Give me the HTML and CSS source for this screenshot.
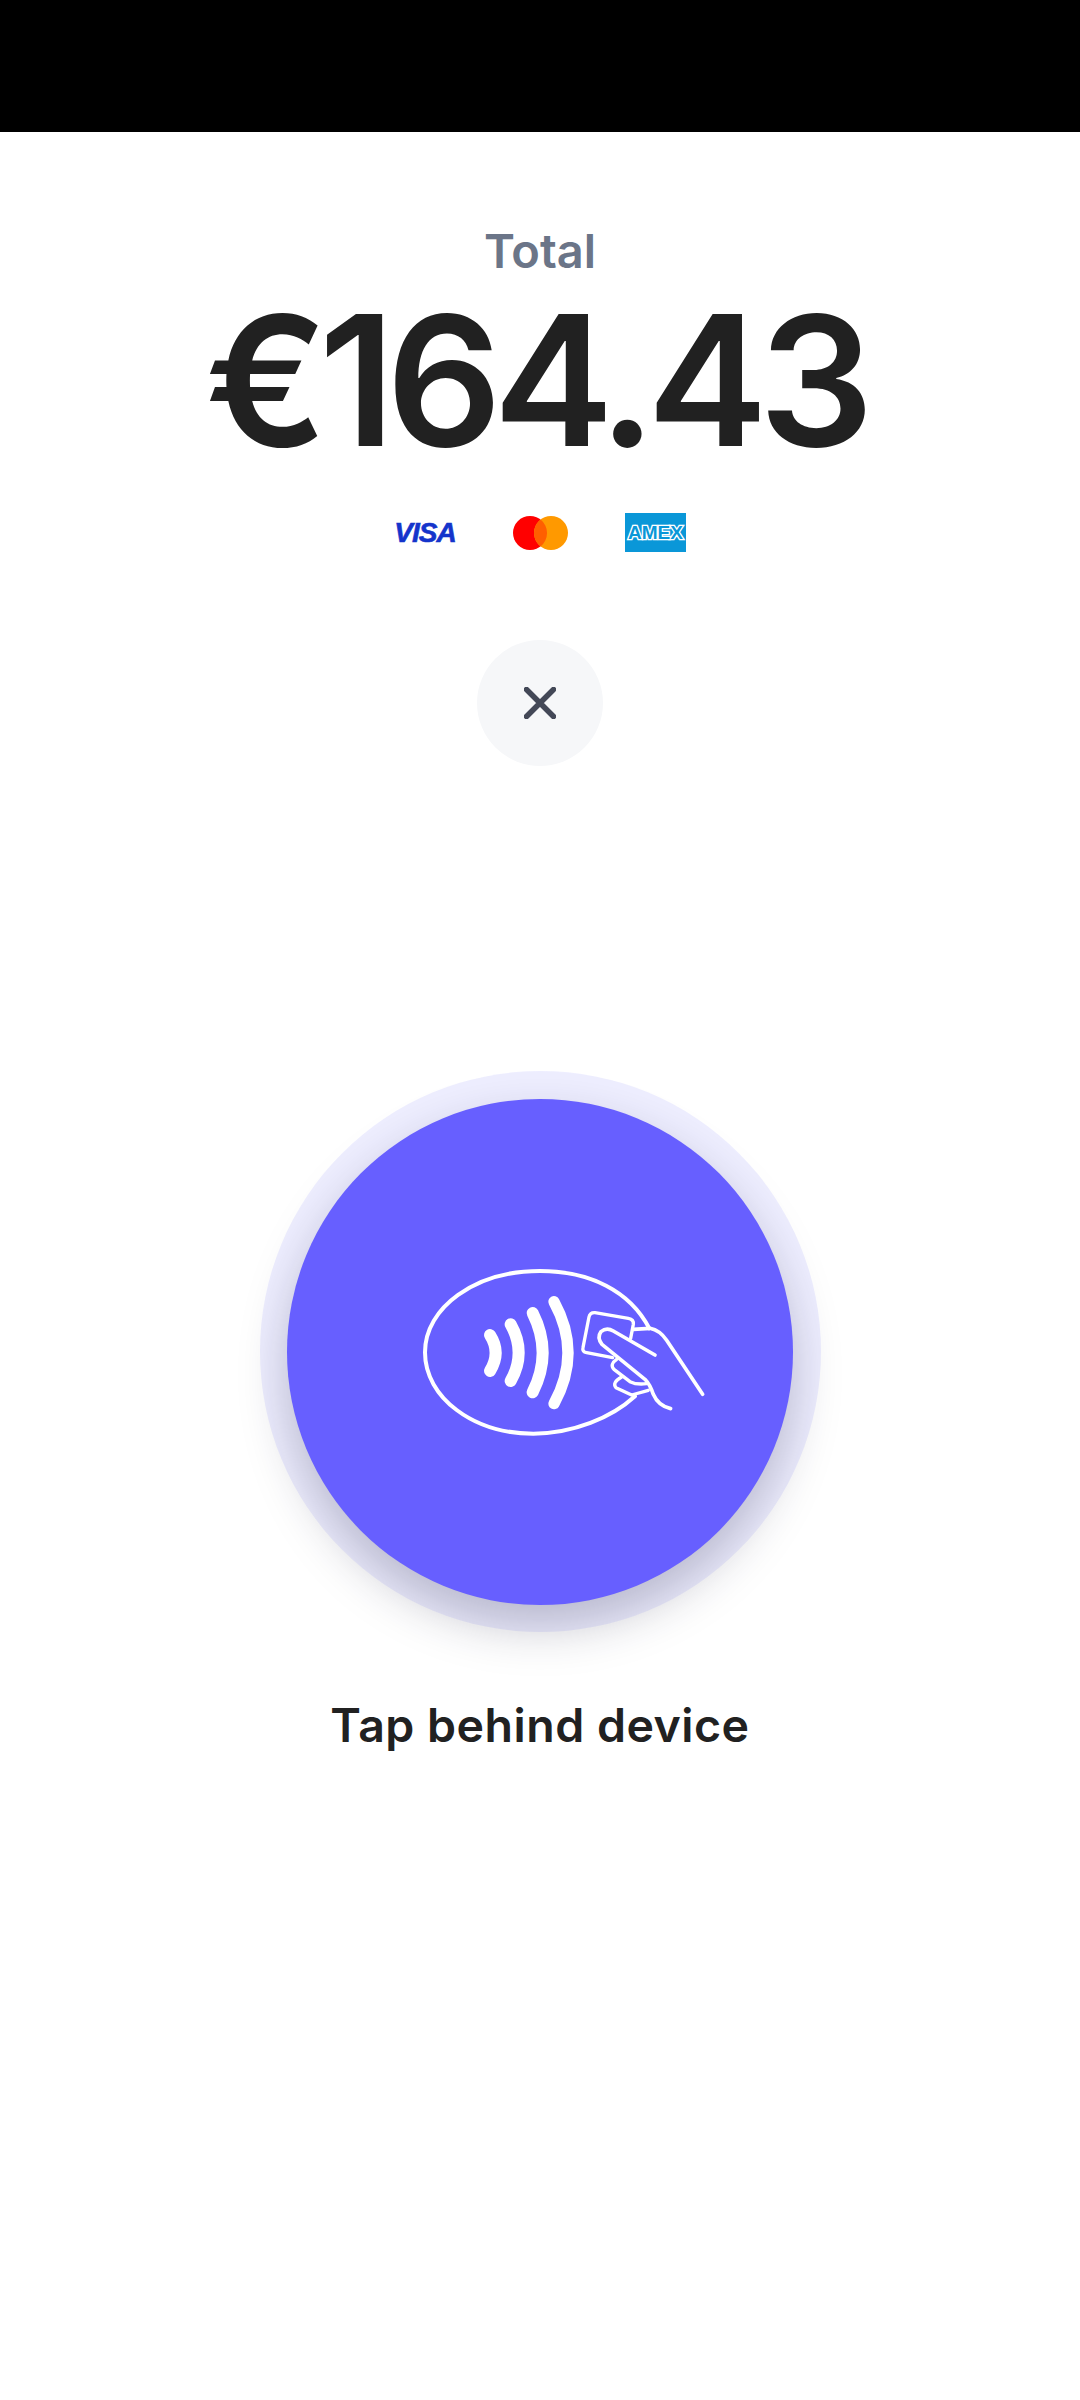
FILE: index.html
```html
<!DOCTYPE html>
<html>
<head>
	<meta charset="utf-8">
	<title>Tap to pay</title>
	<link rel="stylesheet" href="styles.css">
</head>
<body>
  <div class="status-bar"></div>
  <main class="screen">
    <p class="total-label">Total</p>
    <h1 class="total-amount">€164.43</h1>
    <div class="card-logos">
      <div class="logo"><span class="visa">VISA</span></div>
      <div class="logo">
        <svg width="55" height="34" viewBox="0 0 55 34">
          <circle cx="17" cy="17" r="17" fill="#ff0000"/>
          <circle cx="38" cy="17" r="17" fill="#ff9900"/>
          <path d="M27.5 3.6a17 17 0 0 1 0 26.8a17 17 0 0 1 0-26.8z" fill="#ff5f00"/>
        </svg>
      </div>
      <div class="logo">
        <svg class="amex" width="61" height="39" viewBox="0 0 61 39">
          <rect width="61" height="39" fill="#0a97d8"/>
          <text class="amex-text" x="30.5" y="25.5" text-anchor="middle" textLength="55" lengthAdjust="spacingAndGlyphs">AMEX</text>
        </svg>
      </div>
    </div>
    <button class="close-btn">
      <svg width="32" height="32" viewBox="0 0 32 32">
        <path d="M2.5 2.5L29.5 29.5M29.5 2.5L2.5 29.5" stroke="#434857" stroke-width="5.5" stroke-linecap="round"/>
      </svg>
    </button>
    <div class="tap-ring">
      <div class="tap-circle">
        <svg class="tap-icon" width="506" height="506" viewBox="0 0 506 506">
          <!-- traced at 3x, so the group scales back down -->
          <g transform="translate(113 142) scale(.3333)" fill="none" stroke="#fff" stroke-linecap="round" stroke-linejoin="round">
            <path stroke-width="12" d="M748 262C690 150 570 90 420 90C225 90 75 200 75 334C75 470 220 578 400 578C520 578 635 530 705 466"/>
            <path stroke-width="36" d="M270 282Q304 335 270 390"/>
            <path stroke-width="36" d="M332 250Q380 335 332 420"/>
            <path stroke-width="36" d="M398 216Q458 335 398 454"/>
            <path stroke-width="34" d="M462 182Q546 335 462 488"/>
            <path stroke-width="10" d="M638 350L560 335Q546 332 549 320L567 228Q570 214 585 215L685 232Q702 235 700 250L692 292"/>
            <path stroke-width="11" d="M765 342L640 270Q620 258 603 272Q590 290 606 310L735 415Q750 430 760 460Q775 495 812 503"/>
            <path stroke-width="11" d="M700 265L750 262Q780 268 800 298L908 460"/>
            <path stroke-width="10" d="M650 355Q628 370 642 385L690 422Q710 432 740 428"/>
            <path stroke-width="10" d="M665 408Q635 425 648 440L695 462L745 448"/>
          </g>
        </svg>
      </div>
    </div>
    <p class="tap-label">Tap behind device</p>
  </main>
</body>
</html>
```

FILE: styles.css
```css
body {
	font-family: Inter, "Noto Sans", sans-serif;
	margin: 0;
	padding: 0;
	background: #fff;
}
.status-bar {
	height: 132px;
	background: #000;
}
.screen {
	display: flex;
	flex-direction: column;
	align-items: center;
}
.total-label {
	margin: 93px 0 0;
	font-size: 47px;
	line-height: 52px;
	font-weight: 600;
	color: #6b7588;
}
.total-amount {
	margin: 22px 0 0;
	padding-right: 10px;
	font-size: 181px;
	line-height: 164px;
	font-weight: 600;
	color: #212121;
	letter-spacing: -9px;
}
.card-logos {
	display: flex;
	gap: 54px;
	margin-top: 50px;
}
.logo {
	width: 61px;
	height: 39px;
	display: flex;
	align-items: center;
	justify-content: center;
}
.visa {
	font-family: "Liberation Sans", sans-serif;
	font-size: 28px;
	font-weight: bold;
	font-style: italic;
	color: #1434cb;
	letter-spacing: -1px;
	-webkit-text-stroke: 0.6px #1434cb;
}
.amex {
	display: block;
}
.amex-text {
	font-family: "Liberation Sans", sans-serif;
	font-size: 18px;
	font-weight: bold;
	fill: #0a97d8;
	stroke: #fff;
	stroke-width: 2.6px;
	paint-order: stroke;
}
.close-btn {
	width: 126px;
	height: 126px;
	margin-top: 88px;
	padding: 0;
	border: none;
	border-radius: 50%;
	background: #f6f7f9;
	display: flex;
	align-items: center;
	justify-content: center;
}
.tap-ring {
	width: 561px;
	height: 561px;
	margin-top: 305px;
	border-radius: 50%;
	background: rgba(103, 96, 255, 0.11);
	display: flex;
	align-items: center;
	justify-content: center;
}
.tap-circle {
	width: 506px;
	height: 506px;
	border-radius: 50%;
	background: #675fff;
	box-shadow: 0 22px 48px rgba(30, 30, 60, 0.26);
}
.tap-icon {
	display: block;
}
.tap-label {
	margin: 65px 0 0;
	font-size: 46.5px;
	line-height: 56px;
	font-weight: 600;
	letter-spacing: 0.5px;
	color: #212121;
}
```
